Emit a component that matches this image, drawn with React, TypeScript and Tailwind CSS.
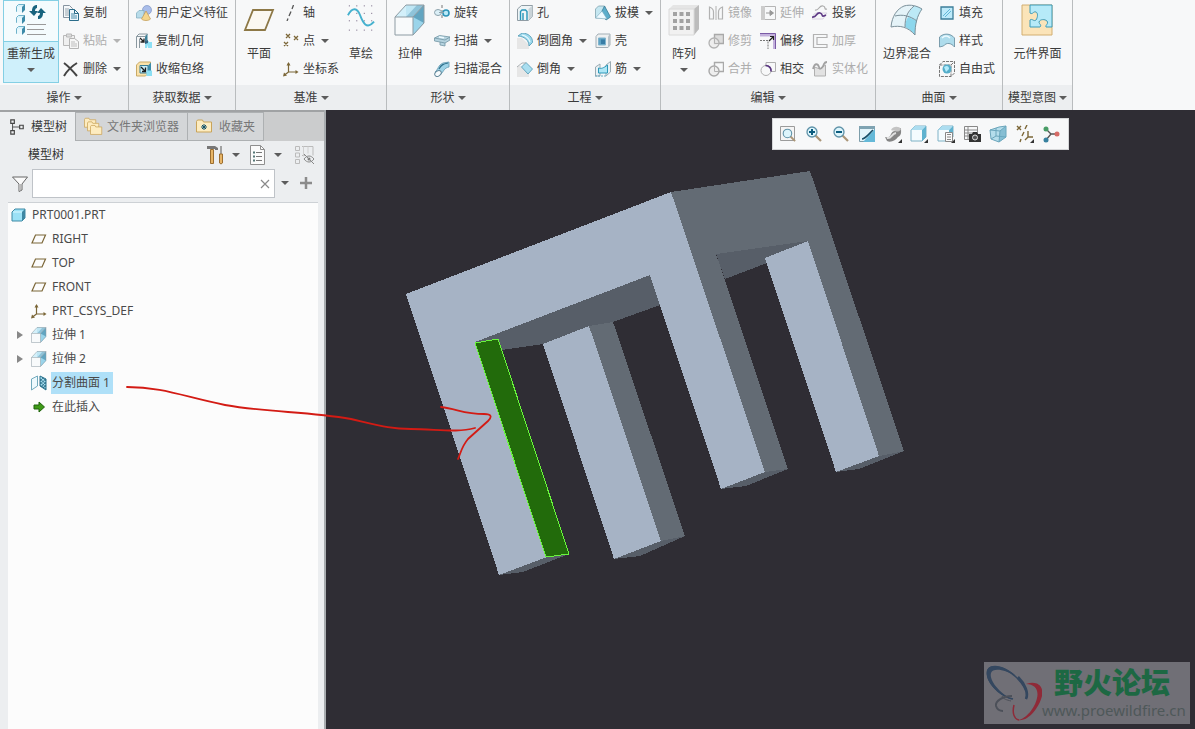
import clsx from "clsx";
import { FunctionComponent, ReactNode, useState } from "react";

/**
 * Part modeler - ribbon, model tree and graphics view
 */

interface IconProps {
  size?: number;
  box?: number;
  children: ReactNode;
}

const Icon: FunctionComponent<IconProps> = ({ size = 16, box = size, children }) => (
  <svg
    width={size}
    height={size}
    viewBox={`0 0 ${box} ${box}`}
    fill="none"
    className="shrink-0"
    aria-hidden="true"
  >
    {children}
  </svg>
);

const Caret: FunctionComponent<{ dim?: boolean }> = ({ dim }) => (
  <svg width="8" height="4" viewBox="0 0 8 4" className="shrink-0" aria-hidden="true">
    <path d="M0 0h8L4 4z" fill={dim ? "#b4b4b4" : "#5c5c5c"} />
  </svg>
);

const EXTRUDE = (
  <>
    <path d="M1 13 12 1h18v18L19 31H1z" fill="#e6eef2" />
    <path d="M1 13 12 1v12z" fill="#d3f0fa" />
    <path d="M12 1h18L19 13h-7z" fill="#8fc3d9" />
    <path d="M12 1 23 1 12 13z" fill="#bfe6f4" />
    <path d="M30 1v18L19 31V13z" fill="#62a5c1" />
    <path d="M30 19 19 31V13z" fill="#9ad4ea" />
    <path d="M1 13h18v18H1z" fill="#f8fafb" />
    <path d="M1 13h18v18H1zM1 13 12 1h18v18L19 31M19 13 30 1" stroke="#8d9ba3" />
  </>
);

const CSYS = (
  <>
    <path d="M5.500 2v9H14M5.500 11 1.500 14" stroke="#7b6637" strokeWidth="1.200" />
    <path d="M3.500 4.500 5.500 1l2 3.500zM12.500 9l3 2-3 2zM0 15.500l1-4 3 3z" fill="#7b6637" />
  </>
);

const ICONS: Record<string, ReactNode> = {
  copy: (
    <>
      <path d="M.5.500h6l3 3v9h-9z" fill="#f5f8fa" stroke="#8794a0" />
      <path d="M2 4h4M2 6h4M2 8h4M2 10h4" stroke="#9aa7b0" />
      <path d="M6.500 4.500h5l4 4v7h-9z" fill="#eef7fc" stroke="#2b6c8a" />
      <path d="M8 9h4M8 11h6M8 13h6" stroke="#478aa9" />
      <path d="M11.500 4.500v4h4" stroke="#2b6c8a" />
    </>
  ),
  paste: (
    <>
      <path d="M.5 2.500h11v10H.5z" fill="#f0f0f0" stroke="#b9b9b9" />
      <path d="M3.500 1h5v3h-5z" fill="#ddd" stroke="#b9b9b9" />
      <path d="M6.500 5.500h5l4 3v7h-9z" fill="#f6f6f6" stroke="#b5b5b5" />
      <path d="M8 9h4M8 11h6M8 13h6" stroke="#bdbdbd" />
    </>
  ),
  delete: <path d="M1 2c4 3 8 7 13 13M14 2C9 5 4 10 1 15" stroke="#444" strokeWidth="2" />,
  udf: (
    <>
      <circle cx="11" cy="5" r="4.500" fill="#a9bdea" stroke="#7f95c4" strokeWidth=".7" />
      <path d="M.5 8 3 5.500h5V13H.5z" fill="#b8dcea" stroke="#7ba9bd" strokeWidth=".7" />
      <path d="m10 6 4.500 8c-2 2-7 2-9 0z" fill="#f4d58c" stroke="#bd9851" strokeWidth=".7" />
    </>
  ),
  copyGeom: (
    <>
      <path d="M.5 15V3.500L3 1h8.500l-2.500 2.500H.5M3.500 15V6" stroke="#8a98a0" />
      <path d="M9 3.500 11.500 1v6L9 9z" fill="#3d8098" />
      <path d="m4 5 4 4M8 5.500V9H4.500" stroke="#222" strokeWidth="1.300" />
      <path d="M9 8h4l-2 7H9zM12 9h4v6h-4z" fill="#8ee0f5" />
      <path d="m9 8 3-1v3l-3 1z" fill="#315d7c" />
    </>
  ),
  shrink: (
    <>
      <path d="M.5 15V4l3-3h11v9l-5 5z" fill="#fae2aa" stroke="#c9aa67" />
      <path d="M4 4.500h8V12H4z" fill="#c9eef8" stroke="#397c94" />
      <path d="m12 4.500 3-3V10l-3 3z" fill="#3b8ba8" />
      <path d="m5 6 4 4M9.500 6.500v4H6" stroke="#1b1b1b" strokeWidth="1.300" />
      <path d="M10.500 9.500H16V15h-5.500z" fill="#8bdff3" />
    </>
  ),
  axis: <path d="M10.500 0 9 4M8 6.500 6 11M5 13.500 4 16" stroke="#555" strokeWidth="1.300" />,
  point: (
    <path
      d="m3 1 4 4m0-4L3 5m8-2 4 4m0-4-4 4M1 9l4 4m0-4-4 4"
      stroke="#7b6637"
      strokeWidth="1.300"
    />
  ),
  csys: CSYS,
  revolve: (
    <>
      <path d="M8 0v3M8 5v3M8 10v3" stroke="#777" />
      <ellipse cx="4" cy="7.500" rx="3.500" ry="3" fill="#dbeff7" stroke="#8ba1ab" />
      <circle cx="12" cy="8" r="3" fill="#b9eaf8" stroke="#2d93b8" strokeWidth="1.600" />
      <path d="M5 7.500h5" stroke="#8ba1ab" />
    </>
  ),
  sweep: (
    <>
      <path d="m.5 5 5-2.500L16 4v3l-5 3v3l-5-1V9L.5 8z" fill="#b5d3df" stroke="#7295a5" strokeWidth=".8" />
      <path d="M.5 5 11 7l5-3M6 9l5 1" stroke="#7295a5" strokeWidth=".8" />
      <path d="m5 4 5 .8" stroke="#eefaff" strokeWidth="1.500" />
    </>
  ),
  sweptBlend: (
    <>
      <path d="M1 11C4 9 4 4 9 2l6-1v5c-5 1-5 4-8 7z" fill="#9ed3e7" stroke="#5f97ae" strokeWidth=".8" />
      <path d="M5 8c2-4 4-5 9-6" stroke="#2f708c" strokeWidth="1.200" />
      <ellipse cx="4" cy="12.500" rx="3.500" ry="2.500" transform="rotate(-35 4 12.500)" fill="#f7fbfd" stroke="#63889a" />
    </>
  ),
  hole: (
    <>
      <path d="m.5 4 4-3.500h11v11l-4 4H.5z" fill="#eef4f6" stroke="#8f9ca4" />
      <path d="m11.500 4 4-3.500v11l-4 4z" fill="#c9d3d8" />
      <path d="M3.500 15V6.500L5 5h3.500L10 6.500V15M6 15V8" stroke="#2796ba" strokeWidth="1.400" />
    </>
  ),
  round: (
    <>
      <path d="M0 5h5l7 7v4H0z" fill="#e6e6e6" />
      <path d="m1 3 4-3c6 0 11 4 10.500 9.500L12 13C12 7 7 3.500 1 3z" fill="#9bd8ec" stroke="#4e97b2" strokeWidth=".8" />
      <path d="M5 2c4 1 7 3 8 7" stroke="#eafaff" strokeWidth="1.200" />
    </>
  ),
  chamfer: (
    <>
      <path d="M0 5h5l7 7v4H0z" fill="#e6e6e6" />
      <path d="M9 1.500 15.500 8 11 13 4.500 6z" fill="#a9def0" stroke="#4e97b2" strokeWidth=".8" />
      <path d="m0 6 5-4h4" stroke="#aab0b3" />
    </>
  ),
  draft: (
    <>
      <path d="m.5 4 3-3h6L13 13H.5z" fill="#c5e7f1" stroke="#82a3b0" strokeWidth=".8" />
      <path d="M9.500 1 15.500 12 11 15 6 8z" fill="#5daecb" stroke="#3b7c97" strokeWidth=".8" />
      <path d="M.5 13 7 6l5 8z" fill="#eefaff" stroke="#7ba9bd" strokeWidth=".6" />
    </>
  ),
  shell: (
    <>
      <path d="M1 3.500 3 1h12v11l-2 2.500H1z" fill="#eef0f1" stroke="#a3afb6" />
      <path d="m13 3.500 2-2.500v11l-2 2.500z" fill="#b8c2c8" />
      <path d="M3.500 5h7v7h-7z" fill="#5fa3c5" stroke="#7fb3cc" />
      <path d="M6 6.500h4V11H6z" fill="#387da6" />
    </>
  ),
  rib: (
    <>
      <path d="M.5 6 5 3v12H.5zM11 4l4.500-3.500V11L11 15z" fill="#e8f1f5" stroke="#9aabb3" />
      <path d="M3.500 7c3 1 5 0 9-3v8h-9z" fill="#aee6f5" stroke="#2c98b9" />
      <path d="M0 15h11" stroke="#68a9c0" strokeDasharray="2 1" />
    </>
  ),
  mirror: (
    <>
      <path d="M1.500 2c3 1 4 3 4 5v7h-4zM14.500 2c-3 1-4 3-4 5v7h4z" stroke="#b2b2b2" strokeWidth="1.200" />
      <path d="M8 1v14" stroke="#b2b2b2" />
    </>
  ),
  trim: (
    <>
      <path d="M6.500 1.500h9v9h-9z" fill="#dcdcdc" stroke="#a9a9a9" strokeWidth="1.400" />
      <circle cx="6" cy="10" r="5" fill="#e9e9e9" fillOpacity=".7" stroke="#b2b2b2" strokeWidth="1.300" />
      <path d="M6.500 6v4.500H11" stroke="#b2b2b2" />
    </>
  ),
  merge: (
    <>
      <path d="M6.500 5V1.500h9v9H11" stroke="#a9a9a9" strokeWidth="1.400" />
      <circle cx="6" cy="10" r="5" fill="#eee" stroke="#a9a9a9" strokeWidth="1.400" />
      <path d="M6.500 6v4.500H11" stroke="#b2b2b2" />
    </>
  ),
  extend: (
    <>
      <path d="M1 1.500h14.500v13H1" stroke="#b5b5b5" />
      <path d="M1 1h4v14H1z" fill="#ccc" />
      <path d="M6 8h7M10 5.500l3.500 2.500-3.500 2.500z" fill="#999" stroke="#999" />
    </>
  ),
  offset: (
    <>
      <path d="M0 2h14.500v14" stroke="#c3b1dc" strokeWidth="3" />
      <path d="M0 .5h15.500V16" stroke="#7a5ba6" />
      <path d="M0 7.500h8V16" stroke="#777" strokeDasharray="2 1" />
      <path d="m9 8 4-4M10 3.500h3.500V7" stroke="#222" strokeWidth="1.200" />
    </>
  ),
  intersect: (
    <>
      <path d="M6 5V1.500h9.500v9H11" stroke="#b0b0b0" />
      <circle cx="6" cy="9.500" r="5" stroke="#b0b0b0" />
      <path d="M5.500 4.500c4 0 6 3 5.500 6" stroke="#56327f" strokeWidth="1.600" />
    </>
  ),
  project: (
    <>
      <path d="M3 5c4 1 4-5 8-4s0 4 4 3" stroke="#aaa" strokeWidth="1.200" />
      <path d="m2 9 2-1h11l-4 6H0z" stroke="#cfc6d8" strokeWidth=".7" />
      <path d="M0 12c5 1 4-5 8-4s0 5 6 2" stroke="#5f3b86" strokeWidth="1.700" />
    </>
  ),
  thicken: <path d="M15 1.500H1.500v13H15v-3H5v-7h10z" stroke="#b2b2b2" strokeWidth="1.200" />,
  solidify: (
    <>
      <path d="M2.500 6v9h11V4L8 8z" fill="#e2e2e2" stroke="#b0b0b0" />
      <path d="M1 8c2-7 5-5 6-2 1 4 4 0 5-3 1-2 2-2 3-2" stroke="#a2a2a2" strokeWidth="1.800" />
    </>
  ),
  fill: (
    <>
      <path d="M2 2h12v12H2z" fill="#bdeafa" stroke="#3c7d99" strokeWidth="1.300" />
      <path d="m4 11 7-7M6 12l6-6" stroke="#62b8d6" />
    </>
  ),
  style: (
    <>
      <path d="M.5 4c4-4 11-4 15 1v9c-3-4-8-5-11-1l-4 1z" fill="#aedcec" stroke="#65899a" strokeWidth=".8" />
      <path d="M3 5c3-3 6-2 8 0" stroke="#edfaff" strokeWidth="1.500" />
    </>
  ),
  freestyle: (
    <>
      <path d="M.5 4 4 .5h11.500V12L12 15.500H.5zM.5 4H12v11.500M12 4 15.500.5" stroke="#666" strokeWidth=".9" strokeDasharray="3 1" />
      <circle cx="8" cy="8" r="4.500" fill="#55adc9" />
      <path d="M5 6c3-2 5-1 5 2l-3 3z" fill="#b3ecfc" />
    </>
  ),
};

const BIG_ICONS: Record<string, ReactNode> = {
  regenerate: (
    <Icon size={32}>
      {[1, 12, 23].map(y => (
        <g key={y}>
          <path d={`M1.500 ${y + 2.5}l2-2h6v5l-2 2h-6z`} fill="#d9f3fb" stroke="#6fb2ca" />
          <path d={`M7 ${y + 3}l3-3v6l-3 3z`} fill="#3c8aa8" />
          <path d={`M2 ${y + 3}h5v5H2z`} fill="#e9f8fd" />
        </g>
      ))}
      <path d="M17 8c0-4 2-6 5-6v3c-1 0-2 1-2 3h3l-4 5-5-5z" fill="#17637e" />
      <path d="M28 10c0 4-2 6-5 6v-3c1 0 2-1 2-3h-3l4-5 5 5z" fill="#17637e" />
      <path d="M12 21.500h19M12 26.500h17M12 31.500h19" stroke="#9a9a9a" />
    </Icon>
  ),
  plane: (
    <Icon size={32}>
      <path d="M10 6h20l-8 20H2z" fill="#fbf8f1" stroke="#8d7846" strokeWidth="1.800" />
    </Icon>
  ),
  sketch: (
    <Icon size={28} box={30}>
      {[2, 10, 18, 28].map(y => (
        <path key={y} d={`M2 ${y}h27`} stroke="#5d4a6d" strokeDasharray="1 7" />
      ))}
      <path d="M1 12c5-9 10-8 13 0s7 16 15 7" stroke="#45b1ce" strokeWidth="2" />
    </Icon>
  ),
  extrude: <Icon size={32}>{EXTRUDE}</Icon>,
  pattern: (
    <Icon size={32}>
      <path d="m1 5 4-4h26v24l-5 6H1z" fill="#e5e5e5" />
      <path d="m26 5 5-4v24l-5 6z" fill="#bcbcbc" />
      <path d="M1 5h25v26H1z" fill="#f1f1f1" stroke="#dadada" />
      {[10, 17, 24].map(y => (
        <path key={y} d={`M5 ${y}h17`} stroke="#a2a2a2" strokeWidth="4" strokeDasharray="4 2.500" />
      ))}
    </Icon>
  ),
  boundary: (
    <Icon size={34}>
      <path d="M1 23C2 12 7 5 14 2c7-2 13 0 18 3-5 7-7 15-7 26-7-8-15-10-24-8z" fill="#e5f3f8" />
      <path d="M18 13c4 1 7 2 9 4-2 5-2 9-2 14-3-4-6-6-10-8 0-3 1-7 3-10z" fill="#8cd7ed" />
      <path d="M18 13c1-5 3-8 6-11 3 0 5 1 8 3-2 3-4 7-5 12z" fill="#bce9f6" />
      <path
        d="M1 23C2 12 7 5 14 2c7-2 13 0 18 3-5 7-7 15-7 26-7-8-15-10-24-8zM5 12c8-2 15 0 22 5M24 2c-7 6-9 12-9 21"
        stroke="#7b909a"
      />
    </Icon>
  ),
  component: (
    <Icon size={32}>
      <path d="M1 1h30v30H1z" fill="#fbe4b9" stroke="#d2ae70" />
      <path
        d="M9 1h22v22h-6c-1-2 3-3 1-6-2-2-7-2-8 1 0 2 3 3 1 5H9v-7c2-2 4 2 6 0 2-3 2-7 0-8-3-1-3 3-6 1z"
        fill="#b6eaf8"
        stroke="#3c9bb9"
      />
    </Icon>
  ),
};

type Command = {
  icon: string;
  label: string;
  menu?: boolean;
  dim?: boolean;
};

const ToolButton: FunctionComponent<Command> = ({ icon, label, menu, dim }) => (
  <button
    type="button"
    disabled={dim}
    className={clsx(
      "flex h-6 items-center gap-1 whitespace-nowrap",
      dim ? "text-[#adadad]" : "text-[#3b3b3b]"
    )}
  >
    <Icon>{ICONS[icon]}</Icon>
    <span>{label}</span>
    {menu && (
      <span className="ml-0.5">
        <Caret dim={dim} />
      </span>
    )}
  </button>
);

const ToolColumn: FunctionComponent<{ items: Command[] }> = ({ items }) => (
  <div className="flex flex-col items-start gap-1 pt-px">
    {items.map(item => (
      <ToolButton key={item.label} {...item} />
    ))}
  </div>
);

const BigButton: FunctionComponent<Command> = ({ icon, label, menu }) => (
  <button type="button" className="flex h-[83px] flex-col items-center whitespace-nowrap">
    <span className="flex h-[42px] items-start justify-center pt-1">{BIG_ICONS[icon]}</span>
    <span className="h-6 leading-6">{label}</span>
    {menu && (
      <span className="pt-0.5">
        <Caret />
      </span>
    )}
  </button>
);

interface GroupProps {
  title: string;
  className?: string;
  children: ReactNode;
}

const Group: FunctionComponent<GroupProps> = ({ title, className, children }) => (
  <section className="flex shrink-0 flex-col border-r border-[#b9bcbe]">
    <div className={clsx("flex h-[85px]", className)}>{children}</div>
    <button
      type="button"
      className="flex h-[25px] items-center justify-center gap-[3px] bg-[#eceef0] text-[#3b3b3b]"
    >
      {title}
      <Caret />
    </button>
  </section>
);

const Ribbon: FunctionComponent = () => (
  <header className="flex overflow-hidden bg-[#f7f8f9]">
    <Group title="操作" className="w-[128px] gap-1 pl-[3px]">
      <button
        type="button"
        className="flex h-[83px] w-14 shrink-0 flex-col items-center whitespace-nowrap border border-[#84cfe4] bg-[#cff0fb]"
      >
        <span className="flex h-[41px] w-full items-start justify-center border-b border-[#84cfe4] bg-[#f4fbfd] pt-0.5">
          {BIG_ICONS.regenerate}
        </span>
        <span className="h-6 leading-6">重新生成</span>
        <span className="pt-0.5">
          <Caret />
        </span>
      </button>
      <ToolColumn
        items={[
          { icon: "copy", label: "复制" },
          { icon: "paste", label: "粘贴", menu: true, dim: true },
          { icon: "delete", label: "删除", menu: true },
        ]}
      />
    </Group>
    <Group title="获取数据" className="w-[106px] pl-[7px]">
      <ToolColumn
        items={[
          { icon: "udf", label: "用户定义特征" },
          { icon: "copyGeom", label: "复制几何" },
          { icon: "shrink", label: "收缩包络" },
        ]}
      />
    </Group>
    <Group title="基准" className="w-[150px] gap-2 pl-[7px]">
      <BigButton icon="plane" label="平面" />
      <ToolColumn
        items={[
          { icon: "axis", label: "轴" },
          { icon: "point", label: "点", menu: true },
          { icon: "csys", label: "坐标系" },
        ]}
      />
      <BigButton icon="sketch" label="草绘" />
    </Group>
    <Group title="形状" className="w-[122px] gap-2 pl-[7px]">
      <BigButton icon="extrude" label="拉伸" />
      <ToolColumn
        items={[
          { icon: "revolve", label: "旋转" },
          { icon: "sweep", label: "扫描", menu: true },
          { icon: "sweptBlend", label: "扫描混合" },
        ]}
      />
    </Group>
    <Group title="工程" className="w-[150px] gap-2 pl-[7px]">
      <ToolColumn
        items={[
          { icon: "hole", label: "孔" },
          { icon: "round", label: "倒圆角", menu: true },
          { icon: "chamfer", label: "倒角", menu: true },
        ]}
      />
      <ToolColumn
        items={[
          { icon: "draft", label: "拔模", menu: true },
          { icon: "shell", label: "壳" },
          { icon: "rib", label: "筋", menu: true },
        ]}
      />
    </Group>
    <Group title="编辑" className="w-[214px] gap-2 pl-[7px]">
      <BigButton icon="pattern" label="阵列" menu />
      <ToolColumn
        items={[
          { icon: "mirror", label: "镜像", dim: true },
          { icon: "trim", label: "修剪", dim: true },
          { icon: "merge", label: "合并", dim: true },
        ]}
      />
      <ToolColumn
        items={[
          { icon: "extend", label: "延伸", dim: true },
          { icon: "offset", label: "偏移" },
          { icon: "intersect", label: "相交" },
        ]}
      />
      <ToolColumn
        items={[
          { icon: "project", label: "投影" },
          { icon: "thicken", label: "加厚", dim: true },
          { icon: "solidify", label: "实体化", dim: true },
        ]}
      />
    </Group>
    <Group title="曲面" className="w-[126px] gap-2 pl-[7px]">
      <BigButton icon="boundary" label="边界混合" />
      <ToolColumn
        items={[
          { icon: "fill", label: "填充" },
          { icon: "style", label: "样式" },
          { icon: "freestyle", label: "自由式" },
        ]}
      />
    </Group>
    <Group title="模型意图" className="w-[69px] justify-center">
      <BigButton icon="component" label="元件界面" />
    </Group>
  </header>
);

const PLANE = <path d="M4.500 4h10l-3.500 8H1z" stroke="#7b6637" strokeWidth="1.200" />;

type TreeNode = {
  label: string;
  icon: ReactNode;
  root?: boolean;
  expandable?: boolean;
};

const TREE: TreeNode[] = [
  {
    label: "PRT0001.PRT",
    root: true,
    icon: (
      <Icon>
        <path d="m1 5 3-3h10v9l-3 3H1z" fill="#9be1f6" stroke="#3f8aa5" />
        <path d="m11 5 3-3v9l-3 3z" fill="#3e87a3" />
        <path d="M2 5h9" stroke="#dcf7ff" />
      </Icon>
    ),
  },
  { label: "RIGHT", icon: <Icon>{PLANE}</Icon> },
  { label: "TOP", icon: <Icon>{PLANE}</Icon> },
  { label: "FRONT", icon: <Icon>{PLANE}</Icon> },
  { label: "PRT_CSYS_DEF", icon: <Icon>{CSYS}</Icon> },
  { label: "拉伸 1", expandable: true, icon: <Icon box={32}>{EXTRUDE}</Icon> },
  { label: "拉伸 2", expandable: true, icon: <Icon box={32}>{EXTRUDE}</Icon> },
  {
    label: "分割曲面 1",
    icon: (
      <Icon>
        <path d="m.5 4 6-3v10l-6 4z" fill="#edf9fd" stroke="#72aabd" />
        <path d="m9 1 6 3v11l-6-4z" fill="#a5dcee" stroke="#28718d" />
        <path
          d="m9 4 6 5M9 7l6 5M9 10l6 4M11 2l4 4M9 9l6-5M9 6l3-3M10 12l5-5M12 13l3-3"
          stroke="#1e617d"
          strokeWidth=".7"
        />
      </Icon>
    ),
  },
  {
    label: "在此插入",
    icon: (
      <Icon>
        <path d="M3 6h5V3l5.500 5L8 13v-3H3z" fill="#3f9a17" stroke="#1f620b" />
      </Icon>
    ),
  },
];

const FOLDER = "M0 2.500 1 1h5l1 2h8v10H0z";

const ModelTree: FunctionComponent = () => {
  const [query, setQuery] = useState("");
  const [selected, setSelected] = useState("分割曲面 1");

  return (
    <aside className="flex w-[326px] shrink-0 flex-col border-r-2 border-[#a8acaf] bg-[#eceef0]">
      <div role="tablist" className="flex h-[31px] border-t-2 border-[#a0a2a4] bg-[#cbcccd] text-[#777]">
        <button
          type="button"
          role="tab"
          aria-selected="true"
          className="flex w-[75px] items-center gap-1.5 bg-[#eceef0] pl-[9px] text-[#3b3b3b]"
        >
          <Icon size={16} box={18}>
            <path d="M2 1h4v4H2zM2 13h4v4H2zM12 7h4v4h-4z" stroke="#444" strokeWidth="1.300" />
            <path d="M4 5v8M4 9h8" stroke="#444" />
          </Icon>
          模型树
        </button>
        <button
          type="button"
          role="tab"
          aria-selected="false"
          className="flex w-[113px] items-center gap-1 border border-[#adb0b2] bg-[#d4d6d8] pl-2"
        >
          <Icon size={19}>
            {[0, 3, 6].map(n => (
              <path
                key={n}
                d={FOLDER}
                transform={`translate(${n + 0.5} ${n * 1.2 + 0.5}) scale(.75)`}
                fill="#fdecc0"
                stroke="#c9a45a"
              />
            ))}
          </Icon>
          文件夹浏览器
        </button>
        <button
          type="button"
          role="tab"
          aria-selected="false"
          className="flex w-[76px] items-center gap-1.5 border border-l-0 border-[#adb0b2] bg-[#d4d6d8] pl-2"
        >
          <Icon size={17}>
            <path d={FOLDER} transform="translate(.5 1)" fill="#fdecc0" stroke="#c9a45a" />
            <path d="M8 6v6M5 9h6M6 7l4 4M10 7l-4 4" stroke="#14536b" />
          </Icon>
          收藏夹
        </button>
      </div>

      <div className="flex h-7 items-center pl-7 pr-2.5 text-[#333]">
        <h1 className="flex-1">模型树</h1>
        <button type="button" aria-label="设置" className="flex items-center gap-1.5">
          <Icon size={20}>
            <path d="M1 1h8l3 2v2H9V4H1z" fill="#777" />
            <path d="M4.500 4.500h3v14h-3z" fill="#e7b567" stroke="#9c6e30" />
            <path d="M15 1v8" stroke="#888" strokeWidth="1.500" />
            <path d="M13.500 9h3v9l-1.500 1-1.500-1z" fill="#e7b567" stroke="#9c6e30" />
          </Icon>
          <Caret />
        </button>
        <button type="button" aria-label="显示" className="ml-2 flex items-center gap-1.5">
          <Icon size={20}>
            <path d="M2.500.5h10l4 4v15h-14z" fill="#fbfbfb" stroke="#8f8f8f" />
            <path d="M12.500.5v4h4" stroke="#8f8f8f" />
            <path d="M8 7.500h6M8 11.500h6M8 15.500h6" stroke="#777" />
            <path d="M5 7.500h2M5 11.500h2M5 15.500h2" stroke="#577" strokeWidth="2" />
          </Icon>
          <Caret />
        </button>
        <button type="button" aria-label="隐藏项" className="ml-3">
          <Icon size={20}>
            <path d="M1.500 1.500h4v4h-4zM1.500 8h4v4h-4zM1.500 14.500h4v4h-4zM8 1.500h11v9M8 10.500h4" stroke="#bbb" />
            <path d="M9.500 1.500v10M14 1.500v7" stroke="#d0d0d0" />
            <path d="M10 14c3-4 7-4 10 0-3 4-7 4-10 0z" stroke="#888" />
            <circle cx="15" cy="14" r="1.500" fill="#777" />
            <path d="m10 9 10 10" stroke="#888" />
          </Icon>
        </button>
      </div>

      <div className="flex h-[33px] items-start pl-3 pr-3">
        <span className="flex h-[29px] w-5 items-center">
          <Icon>
            <path d="M.5 1h15L10 8v6l-3 1.500V8z" fill="#fafafa" stroke="#666" />
            <path d="M9 8v6l-2 1V8z" fill="#bbb" />
          </Icon>
        </span>
        <div className="flex h-[29px] flex-1 items-center border border-[#bfc3c8] bg-white pr-1">
          <input
            type="text"
            aria-label="过滤"
            value={query}
            onChange={e => setQuery(e.target.value)}
            className="w-full min-w-0 flex-1 bg-transparent px-2 outline-none"
          />
          <button type="button" aria-label="清除" onClick={() => setQuery("")}>
            <Icon size={10}>
              <path d="m1 1 8 8M9 1 1 9" stroke="#8a8a8a" strokeWidth="1.200" />
            </Icon>
          </button>
        </div>
        <button type="button" aria-label="过滤选项" className="flex h-[27px] items-center pl-1.5">
          <Caret />
        </button>
        <button type="button" aria-label="添加" className="flex h-[27px] items-center pl-[11px]">
          <Icon size={12}>
            <path d="M6 0v12M0 6h12" stroke="#8b8b8b" strokeWidth="2.500" />
          </Icon>
        </button>
      </div>

      <ul role="tree" className="ml-2 mr-1.5 flex-1 border-t border-[#cdd1d5] bg-[#fcfcfc] text-[#4a4a4a]">
        {TREE.map(node => (
          <li
            key={node.label}
            role="treeitem"
            aria-selected={selected === node.label}
            className={clsx("flex h-6 items-center", node.root ? "pl-[3px]" : "pl-2")}
          >
            {!node.root && (
              <span className="w-[15px]">
                {node.expandable && (
                  <Icon size={8}>
                    <path d="M1 0v8l6-4z" fill="#888" />
                  </Icon>
                )}
              </span>
            )}
            <button
              type="button"
              onClick={() => setSelected(node.label)}
              className="flex items-center gap-1"
            >
              {node.icon}
              <span
                className={clsx(
                  "h-[22px] px-px leading-[22px]",
                  selected === node.label && "bg-[#afe0f8] pr-[3px]"
                )}
              >
                {node.label}
              </span>
            </button>
          </li>
        ))}
      </ul>
    </aside>
  );
};

const LENS = (
  <>
    <path d="m10 10 6 6" stroke="#ab9678" strokeWidth="2.200" />
    <circle cx="7" cy="7" r="5" fill="#ddf5fc" stroke="#5f92a8" strokeWidth="1.300" />
  </>
);

const MORE = <path d="M18 14v4h-4z" fill="#333" />;

const CUBE = (
  <>
    <path d="m1 5 4-4h11v11l-4 4H1z" fill="#f4fbfe" stroke="#7fb2c6" />
    <path d="m1 5 4-4h11l-4 4z" fill="#acddf0" />
    <path d="m12 5 4-4v11l-4 4z" fill="#5fb2cf" />
  </>
);

const VIEW_TOOLS: { name: string; icon: ReactNode }[] = [
  {
    name: "重新调整",
    icon: (
      <>
        <path d="M1.500 1.500h14v14h-14z" fill="#f5f5f5" stroke="#9b9b9b" />
        <g transform="translate(2.500 2.500) scale(.85)">{LENS}</g>
      </>
    ),
  },
  {
    name: "放大",
    icon: (
      <>
        {LENS}
        <path d="M4 7h6M7 4v6" stroke="#0b5c7f" strokeWidth="2" />
      </>
    ),
  },
  {
    name: "缩小",
    icon: (
      <>
        {LENS}
        <path d="M4 7h6" stroke="#0b5c7f" strokeWidth="2" />
      </>
    ),
  },
  {
    name: "重画",
    icon: (
      <>
        <path d="M1.500 1.500h15v15h-15z" fill="#e3f4fa" stroke="#7d9daa" />
        <path d="M1 1h16v3H1z" fill="#7fa3b2" />
        <path d="M17 4v13H5z" fill="#65b9d8" />
        <path d="M4 14c3 0 5-3 11-9" stroke="#184f68" strokeWidth="1.600" />
      </>
    ),
  },
  {
    name: "渲染选项",
    icon: (
      <>
        <path d="M1 12c3 1 5 0 6-3 1-2 2-3 4-3l6-3c0 4 1 7-3 9-2 3-7 6-11 4z" fill="#858585" />
        <path d="M7 5c2-4 8-4 10-1-1 3-5 3-6 2s-3 0-4-1z" fill="#c4c4c4" />
        <path d="M3 13c5 1 4-4 9-5" stroke="#e0e0e0" strokeWidth="2" />
        {MORE}
      </>
    ),
  },
  {
    name: "显示样式",
    icon: (
      <>
        {CUBE}
        {MORE}
      </>
    ),
  },
  {
    name: "已保存方向",
    icon: (
      <>
        {CUBE}
        <path d="M8.500 7.500h7v9h-7z" fill="#fafafa" stroke="#888" />
        <path d="M10 9.500h4M10 12h4M10 14.500h4" stroke="#888" />
        {MORE}
      </>
    ),
  },
  {
    name: "视图管理器",
    icon: (
      <>
        <path d="M1.500 1.500h13v13h-13zM1.500 5h13M1.500 8h13M1.500 11h13M5 1.500v13" stroke="#888" />
        <path d="M6 9h3l1-2h4l1 2h3v8H6z" fill="#333" />
        <circle cx="12" cy="12.500" r="2.500" fill="#555" stroke="#ddd" />
      </>
    ),
  },
  {
    name: "透视图",
    icon: (
      <>
        <path d="m1 5 9-3 7-1v11l-7 5-8-3z" fill="#b4ddeb" stroke="#6ba5bb" />
        <path d="m1 5 10 1 6-5M11 6l-1 11M7 3v8l-5 3M7 11l10 1" stroke="#6ba5bb" />
        <path d="m11 6 6-5v11l-7 5z" fill="#67aac3" fillOpacity=".6" />
      </>
    ),
  },
  {
    name: "基准显示过滤器",
    icon: (
      <>
        <path
          d="m1 1 4 4m0-4L1 5M11 0 9 4M8 7l-2 4M5 14l-1 3M12 6v6h5M12 12l-3 3"
          stroke="#7b6637"
          strokeWidth="1.400"
        />
        {MORE}
      </>
    ),
  },
  {
    name: "旋转中心",
    icon: (
      <>
        <path d="M4 4 9 9h6M9 9l-5 6" stroke="#555" strokeWidth="1.300" />
        <circle cx="4" cy="4" r="2.500" fill="#489c66" />
        <circle cx="15" cy="9" r="2.500" fill="#d66b66" />
        <circle cx="4" cy="15" r="2.500" fill="#37819f" />
      </>
    ),
  },
];

const ViewToolbar: FunctionComponent = () => (
  <div
    role="toolbar"
    aria-label="图形"
    className="absolute right-[126px] top-2 flex h-8 w-[297px] items-center border border-[#d5d6d8] bg-[#f7f8f9] pl-0.5 pr-1"
  >
    {VIEW_TOOLS.map(tool => (
      <button
        key={tool.name}
        type="button"
        aria-label={tool.name}
        className="flex flex-1 items-center justify-center"
      >
        <Icon size={18}>{tool.icon}</Icon>
      </button>
    ))}
  </div>
);

// Faces are painted back to front in view space
const Model: FunctionComponent = () => (
  <svg
    width="520"
    height="420"
    viewBox="395 160 520 420"
    className="absolute left-[69px] top-[50px]"
    aria-hidden="true"
    shapeRendering="crispEdges"
  >
    <g fill="#575e68">
      <path d="M475 342 650 275 660 305 613 322 590 326 543 344 502 350 498 340z" />
      <path d="M716 254 808 241 765 258 767 263 725 279z" />
      <path d="M499 575 547 557 569 554 523 572z" />
      <path d="M614 559 661 541 685 536 640 556z" />
      <path d="M721 489 765 472 788 469 746 486z" />
      <path d="M836 472 879 456 904 451 859 469z" />
    </g>
    <g fill="#636b74">
      <path d="M671 192 810 171 904 451 879 456 808 241 716 254 788 469 765 472z" />
      <path d="M589 326 613 322 685 536 661 541z" />
    </g>
    <g fill="#a6b3c5">
      <path d="M406 294 671 192 765 472 721 489 650 275 475 342 547 557 499 575z" />
      <path d="M543 344 589 326 661 541 614 559z" />
      <path d="M765 258 808 241 879 456 836 472z" />
    </g>
    <path d="M475 343 498 339 569 554 546 557z" fill="#226b0b" stroke="#69f53c" />
  </svg>
);

const Watermark: FunctionComponent = () => (
  <div className="absolute bottom-[5px] right-[5px] flex h-[62px] w-[206px] bg-[#706f76]">
    <svg width="58" height="62" viewBox="0 0 58 62" fill="none" className="shrink-0" aria-hidden="true">
      <path d="M29 37C14 34 1 18 4 8 7 1 22 6 32 15c8 8 12 16 10 22" stroke="#34475f" strokeWidth="1.500" />
      <path d="M29 38C13 33 0 18 3 8 7 0 22 4 32 14 22 8 9 5 7 11c-2 7 8 20 22 27z" fill="#34475f" />
      <path d="M34 15c7 7 11 16 8 22" stroke="#34475f" strokeWidth="2.500" />
      <path
        d="M42 22c12-4 18 3 16 12-3 12-14 26-24 24 8-1 17-12 19-22 2-8-2-14-11-14z"
        fill="#8f2a38"
      />
      <path d="M35 58c-5-1-7-7-5-15" stroke="#8f2a38" strokeWidth="1.500" />
      <path d="M28 34c-9 0-17 5-16 10 1 3 3 5 7 5" stroke="#4c5059" strokeWidth="2" />
      <path d="M27 39c-4-1-8-2-9-5" stroke="#4c5059" />
    </svg>
    <div className="flex flex-1 flex-col">
      <span className="h-[38px] pl-3 text-[29px] font-black leading-[42px] text-[#1d6843]">
        野火论坛
      </span>
      <span className="whitespace-nowrap text-[15px] leading-[20px] text-[#4e5859]">
        www.proewildfire.cn
      </span>
    </div>
  </div>
);

const App: FunctionComponent = () => (
  <div className="relative flex min-h-screen flex-col overflow-hidden bg-[#2f2d34] font-['Noto_Sans','Noto_Sans_CJK_SC',sans-serif] text-[12px] leading-[18px] text-[#3b3b3b]">
    <Ribbon />
    <div className="flex flex-1">
      <ModelTree />
      <main className="relative min-w-0 flex-1 overflow-hidden">
        <Model />
        <ViewToolbar />
        <Watermark />
      </main>
    </div>

    {/* Hand-drawn pointer from the tree item to the split face */}
    <svg
      width="380"
      height="90"
      viewBox="120 380 380 90"
      fill="none"
      className="pointer-events-none absolute left-[120px] top-[380px]"
      aria-hidden="true"
    >
      <path
        d="M127 387c35 0 58 10 98 18 45 8 81 6 126 14 30 7 40 10 60 10 25 0 46 4 64-1M441 407c16 2 24 7 43 7 8 0 8 3 4 7l-20 18c-6 7-7 13-10 20"
        stroke="#d31b14"
        strokeWidth="1.800"
        strokeLinecap="round"
      />
    </svg>
  </div>
);

export default App;
